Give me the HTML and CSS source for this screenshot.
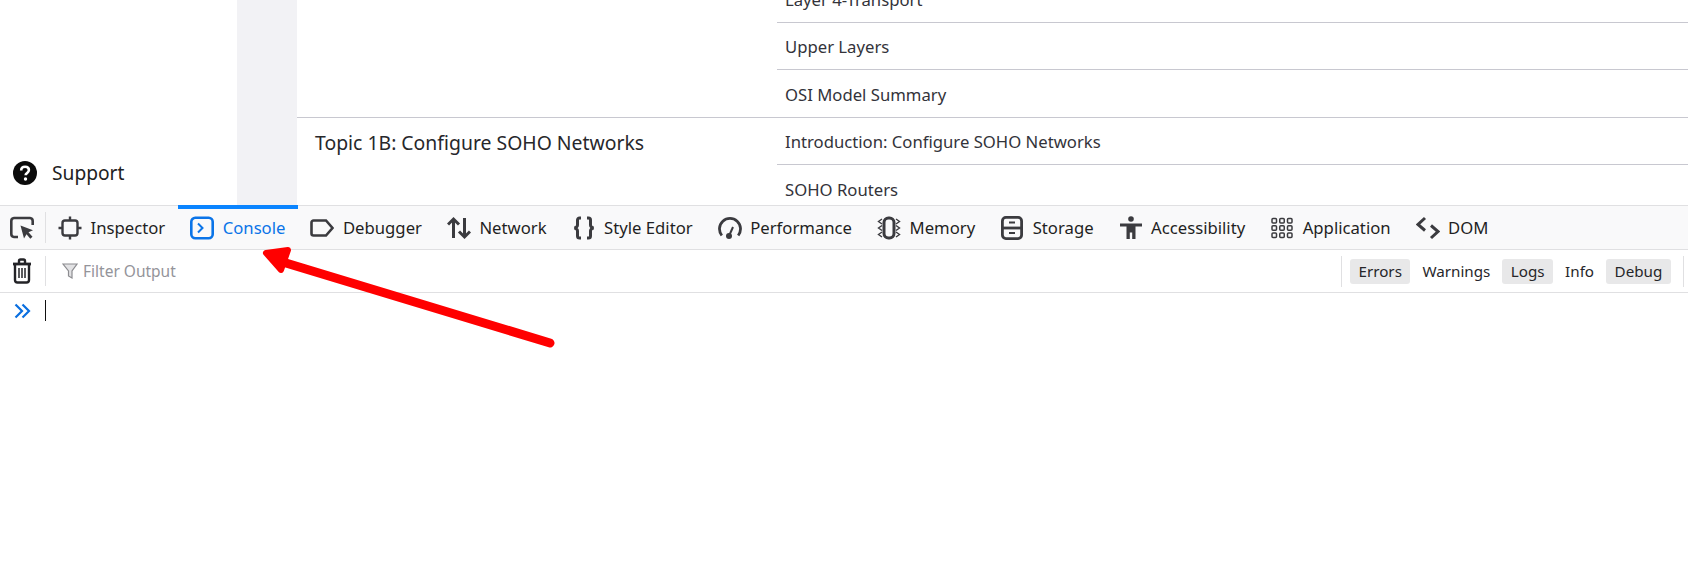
FILE: index.html
```html
<!DOCTYPE html>
<html lang="en">
<head>
<meta charset="utf-8">
<title>Console</title>
<link rel="stylesheet" href="styles.css">
</head>
<body>
<div class="page">
  <aside class="sidebar">
    <div class="support">
      <svg class="support-icon" viewBox="0 0 24 24"><circle cx="12" cy="12" r="12" fill="#0b0b0b"/><path d="M8.200 9.400c0-2.200 1.700-3.600 3.900-3.600s3.800 1.300 3.800 3.300c0 2.900-3.300 2.800-3.300 5.200" fill="none" stroke="#fff" stroke-width="2.600"/><circle cx="12.500" cy="18" r="1.700" fill="#fff"/></svg>
      <span>Support</span>
    </div>
  </aside>
  <div class="gutter"></div>
  <main class="outline">
    <section class="topic">
      <div class="topic-name"></div>
      <ul class="lessons">
        <li>Layer 4-Transport</li>
        <li>Upper Layers</li>
        <li>OSI Model Summary</li>
      </ul>
    </section>
    <section class="topic">
      <div class="topic-name">Topic 1B: Configure SOHO Networks</div>
      <ul class="lessons">
        <li>Introduction: Configure SOHO Networks</li>
        <li>SOHO Routers</li>
      </ul>
    </section>
  </main>
</div>
<div class="devtools">
  <nav class="tabbar">
    <div class="tool-cell">
      <svg class="ico" viewBox="0 0 24 24" fill="none" stroke="#3b3b3f" stroke-width="2.600"><path d="M8 21H4A3 3 0 0 1 1.300 18V5A3 3 0 0 1 4 2H20A3 3 0 0 1 22.700 5V9"/><path d="M10.500 9.500L23 14.200L18.500 16.200L22.500 20.800L20.300 22.800L16.500 18.200L14 22.500Z" fill="#3b3b3f" stroke="none"/></svg>
    </div>
    <a class="tab">
      <svg class="ico" viewBox="0 0 24 24" fill="none" stroke="#3b3b3f" stroke-width="2.400"><rect x="4.500" y="4.500" width="15" height="15" rx="2.500"/><path d="M12 0.500V4.500M12 19.500V23.500M0.500 12H4.500M19.500 12H23.500"/></svg>
      <span>Inspector</span>
    </a>
    <a class="tab selected">
      <svg class="ico" viewBox="0 0 24 24" fill="none" stroke="#0a74e8" stroke-width="2.600"><rect x="1.300" y="1.800" width="21.400" height="20.400" rx="4"/><path d="M8 7.500L12.500 12L8 16.500" stroke-width="2"/></svg>
      <span>Console</span>
    </a>
    <a class="tab">
      <svg class="ico" viewBox="0 0 24 24" fill="none" stroke="#3b3b3f" stroke-width="2.600"><path d="M3.500 4.500H16L22.500 12L16 19.500H3.500A2 2 0 0 1 1.500 17.500V6.500A2 2 0 0 1 3.500 4.500Z"/></svg>
      <span>Debugger</span>
    </a>
    <a class="tab">
      <svg class="ico" viewBox="0 0 24 24" fill="none" stroke="#3b3b3f" stroke-width="3"><path d="M6.500 22V3M1 8.500L6.500 3L12 8.500"/><path d="M17.500 2V21M12 15.500L17.500 21L23 15.500"/></svg>
      <span>Network</span>
    </a>
    <a class="tab">
      <svg class="ico" viewBox="0 0 24 24" fill="none" stroke="#3b3b3f" stroke-width="3"><path d="M9 2H7.500A2 2 0 0 0 5.500 4V9C5.500 10.500 4.500 11.500 2.500 12C4.500 12.500 5.500 13.500 5.500 15V20A2 2 0 0 0 7.500 22H9"/><path d="M15 2H16.500A2 2 0 0 1 18.500 4V9C18.500 10.500 19.500 11.500 21.500 12C19.500 12.500 18.500 13.500 18.500 15V20A2 2 0 0 1 16.500 22H15"/></svg>
      <span>Style Editor</span>
    </a>
    <a class="tab">
      <svg class="ico" viewBox="0 0 24 24" fill="none" stroke="#3b3b3f" stroke-width="2.800"><path d="M3.800 19.500A10.500 10.500 0 1 1 20.200 19.500"/><circle cx="11" cy="20" r="3" fill="#3b3b3f" stroke="none"/><path d="M11 20L15 11" stroke-width="2"/></svg>
      <span>Performance</span>
    </a>
    <a class="tab">
      <svg class="ico" viewBox="0 0 24 24" fill="none" stroke="#3b3b3f" stroke-width="2"><rect x="7" y="2" width="10" height="20" rx="4.500" stroke-width="3"/><path d="M5 3L1.500 5.500L5 8M5 9.500L1.500 12L5 14.500M5 16L1.500 18.500L5 21M19 3L22.500 5.500L19 8M19 9.500L22.500 12L19 14.500M19 16L22.500 18.500L19 21" stroke-width="1.400"/></svg>
      <span>Memory</span>
    </a>
    <a class="tab">
      <svg class="ico" viewBox="0 0 24 24" fill="none" stroke="#3b3b3f" stroke-width="2.800"><rect x="2.400" y="1.400" width="19.200" height="21.200" rx="3.500"/><path d="M2.400 12H21.600"/><path d="M9 6.500H15M9 17H15" stroke-width="2"/></svg>
      <span>Storage</span>
    </a>
    <a class="tab">
      <svg class="ico" viewBox="0 0 24 24" fill="#3b3b3f"><circle cx="12" cy="3" r="2.800"/><path d="M1 7.500H23V10.500H16.500V23H13.200V16.500H10.800V23H7.500V10.500H1Z"/></svg>
      <span>Accessibility</span>
    </a>
    <a class="tab">
      <svg class="ico" viewBox="0 0 24 24" fill="none" stroke="#3b3b3f" stroke-width="1.500"><rect x="2" y="2.500" width="4.500" height="4.500" rx="1"/><rect x="9.750" y="2.500" width="4.500" height="4.500" rx="1"/><rect x="17.500" y="2.500" width="4.500" height="4.500" rx="1"/><rect x="2" y="9.750" width="4.500" height="4.500" rx="1"/><rect x="9.750" y="9.750" width="4.500" height="4.500" rx="1"/><rect x="17.500" y="9.750" width="4.500" height="4.500" rx="1"/><rect x="2" y="17" width="4.500" height="4.500" rx="1"/><rect x="9.750" y="17" width="4.500" height="4.500" rx="1"/><rect x="17.500" y="17" width="4.500" height="4.500" rx="1"/></svg>
      <span>Application</span>
    </a>
    <a class="tab">
      <svg class="ico" viewBox="0 0 24 24" fill="none" stroke="#3b3b3f" stroke-width="3"><path d="M9 2L2 8.500L9 14.500"/><path d="M15 9.500L22 15.500L15 22"/></svg>
      <span>DOM</span>
    </a>
  </nav>
  <div class="toolbar">
    <div class="tool-cell trash-cell">
      <svg class="trash" viewBox="0 0 20 26" fill="none" stroke="#232327" stroke-width="2.400"><path d="M1 6H19" stroke-width="2.800"/><path d="M7 5V3A1.500 1.500 0 0 1 8.500 1.500H11.500A1.500 1.500 0 0 1 13 3V5"/><path d="M3 6V22A2.500 2.500 0 0 0 5.500 24.500H14.500A2.500 2.500 0 0 0 17 22V6"/><path d="M7 10V20M10 10V20M13 10V20" stroke-width="1.500"/></svg>
    </div>
    <div class="filter">
      <svg class="funnel" viewBox="0 0 16 16" fill="#e2e2e4" stroke="#8c8c90" stroke-width="1.200"><path d="M1 1H15L10 8V15L6.500 13V8Z"/></svg>
      <span>Filter Output</span>
    </div>
    <div class="levels">
      <button class="level on">Errors</button>
      <button class="level">Warnings</button>
      <button class="level on">Logs</button>
      <button class="level">Info</button>
      <button class="level on">Debug</button>
    </div>
  </div>
  <div class="prompt">
    <svg class="chevrons" viewBox="0 0 17 16" fill="none" stroke="#0a6fe0" stroke-width="2.200"><path d="M1.500 1.500L8 8L1.500 14.500"/><path d="M8.500 1.500L15 8L8.500 14.500"/></svg>
    <span class="caret"></span>
  </div>
</div>
<svg class="arrow" viewBox="0 0 1688 573" fill="none" stroke="#ff0000" stroke-linecap="round" stroke-linejoin="round"><path d="M550 343L276 260" stroke-width="9"/><path d="M266 253L288 250L281 270Z" fill="#ff0000" stroke-width="6"/></svg>
</body>
</html>
```
FILE: styles.css
```css
* { box-sizing: border-box; }
html, body { margin: 0; height: 100%; background: #fff; overflow: hidden; }
body {
  font-family: "Noto Sans", "Open Sans", sans-serif;
  color: #2b2b30;
  position: relative;
}
.page { display: flex; height: 205px; overflow: hidden; }
.sidebar {
  width: 237px;
  display: flex;
  flex-direction: column;
  justify-content: flex-end;
  padding: 0 0 19px 13px;
}
.support { display: flex; align-items: center; gap: 15px; font-size: 19.2px; color: #222; }
.support-icon { width: 24px; height: 24px; }
.gutter { width: 60px; background: #f2f2f5; }
.outline { flex: 1; margin-top: -24px; }
.topic { display: flex; border-bottom: 1px solid #c8c8d0; }
.topic + .topic { border-bottom: 0; }
.topic-name { width: 480px; padding: 11px 18px; font-size: 19.4px; line-height: 28px; color: #27272b; }
.lessons { flex: 1; margin: 0; padding: 0; list-style: none; }
.lessons li {
  height: 47px;
  padding: 1px 8px 0;
  display: flex;
  align-items: center;
  font-size: 16.7px;
  color: #33333a;
  border-bottom: 1px solid #c8c8d0;
}
.lessons li:last-child { border-bottom: 0; }
.devtools { height: 368px; display: flex; flex-direction: column; }
.tabbar {
  display: flex;
  height: 45px;
  background: #f9f9fa;
  border-top: 1px solid #e0e0e2;
  border-bottom: 1px solid #e0e0e2;
}
.tool-cell {
  width: 46px;
  display: flex;
  align-items: center;
  justify-content: center;
  padding-right: 3px;
  position: relative;
}
.tool-cell::after {
  content: "";
  position: absolute;
  right: 0;
  top: 6px;
  bottom: 6px;
  border-right: 1px solid #e0e0e2;
}
.tab {
  display: flex;
  align-items: center;
  gap: 8.5px;
  padding: 0 13px 0 12px;
  font-size: 16.7px;
  color: #1f1f23;
  position: relative;
}
.tab.selected { color: #0a74e8; }
.tab.selected::before {
  content: "";
  position: absolute;
  left: 0;
  right: 0;
  top: -1px;
  height: 4px;
  background: #0a84ff;
}
.ico { width: 24px; height: 24px; flex: none; }
.toolbar {
  display: flex;
  align-items: center;
  height: 43px;
  border-bottom: 1px solid #e0e0e2;
}
.toolbar .tool-cell { height: 100%; padding-right: 3px; }
.trash { width: 20px; height: 26px; }
.filter {
  display: flex;
  align-items: center;
  gap: 5px;
  padding-left: 16px;
  flex: 1;
  font-size: 15.5px;
  color: #94949a;
}
.funnel { width: 16px; height: 16px; }
.levels {
  display: flex;
  align-items: center;
  gap: 12px;
  height: 31px;
  width: 347px;
  flex: none;
  padding: 0 0 0 8px;
  border-left: 1px solid #e0e0e2;
  position: relative;
}
.levels::after {
  content: "";
  position: absolute;
  right: 4px;
  top: 0;
  bottom: 0;
  border-right: 1px solid #e0e0e2;
}
.level {
  font: inherit;
  font-size: 15.2px;
  color: #26262a;
  border: 0;
  background: none;
  height: 25px;
  padding: 0 8.5px;
  border-radius: 3px;
}
.level:not(.on) { padding: 0; }
.level.on { background: #e8e8e9; }
.prompt { display: flex; align-items: center; gap: 14px; padding: 7px 0 0 14px; }
.chevrons { width: 17px; height: 16px; }
.caret { width: 1px; height: 21px; background: #111; }
.arrow { position: absolute; left: 0; top: 0; width: 1688px; height: 573px; pointer-events: none; }
```
